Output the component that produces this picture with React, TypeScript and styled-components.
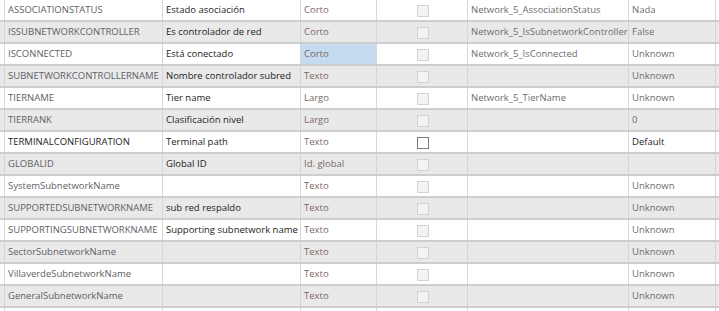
import styled, { createGlobalStyle, css } from "styled-components";

const GlobalStyle = createGlobalStyle`
    html, body {
        margin: 0;
        padding: 0;
        background: #ffffff;
        overflow: hidden;
    }
    body {
        font-family: "Open Sans", "Noto Sans", "Liberation Sans", sans-serif;
        font-size: 9.5px;
    }
`

type Field = {
    name: string
    alias: string
    type: string
    field: string
    value: string
    strong?: boolean
    editable?: boolean
    selected?: boolean
}

const fields: Field[] = [
    { name: "ASSOCIATIONSTATUS", alias: "Estado asociación", type: "Corto", field: "Network_5_AssociationStatus", value: "Nada" },
    { name: "ISSUBNETWORKCONTROLLER", alias: "Es controlador de red", type: "Corto", field: "Network_5_IsSubnetworkController", value: "False" },
    { name: "ISCONNECTED", alias: "Está conectado", type: "Corto", field: "Network_5_IsConnected", value: "Unknown", selected: true },
    { name: "SUBNETWORKCONTROLLERNAME", alias: "Nombre controlador subred", type: "Texto", field: "", value: "Unknown" },
    { name: "TIERNAME", alias: "Tier name", type: "Largo", field: "Network_5_TierName", value: "Unknown" },
    { name: "TIERRANK", alias: "Clasificación nivel", type: "Largo", field: "", value: "0" },
    { name: "TERMINALCONFIGURATION", alias: "Terminal path", type: "Texto", field: "", value: "Default", strong: true, editable: true },
    { name: "GLOBALID", alias: "Global ID", type: "Id. global", field: "", value: "" },
    { name: "SystemSubnetworkName", alias: "", type: "Texto", field: "", value: "Unknown" },
    { name: "SUPPORTEDSUBNETWORKNAME", alias: "sub red respaldo", type: "Texto", field: "", value: "Unknown" },
    { name: "SUPPORTINGSUBNETWORKNAME", alias: "Supporting subnetwork name", type: "Texto", field: "", value: "Unknown" },
    { name: "SectorSubnetworkName", alias: "", type: "Texto", field: "", value: "Unknown" },
    { name: "VillaverdeSubnetworkName", alias: "", type: "Texto", field: "", value: "Unknown" },
    { name: "GeneralSubnetworkName", alias: "", type: "Texto", field: "", value: "Unknown" },
]

const Grid = styled.div`
    display: flex;
    flex-direction: column;
    width: 719px;
    height: 311px;
    overflow: hidden;
`

const Row = styled.div<{ $alt: boolean }>`
    display: grid;
    grid-template-columns: 4px 157px 137px 75px 90px 160px 86px 1fr;
    column-gap: 1px;
    flex: 0 0 20px;
    border-bottom: 2px solid #cdcdcd;
    background: #d6d6d6;
    & > div {
        background: ${p => p.$alt ? "#e9e9e9" : "#ffffff"};
    }
`

const Cell = styled.div<{ $tone?: "name" | "alias" | "type" | "field" | "value" | "strong"; $selected?: boolean }>`
    padding: 0 0 0 3px;
    overflow: hidden;
    white-space: nowrap;
    line-height: 20px;
    color: ${p =>
        p.$tone === "strong" || p.$tone === "alias" ? "#1c1c1c"
            : p.$tone === "type" ? "#7c6666"
                : p.$tone === "name" ? "#5f6066"
                    : "#6d6d6d"};
    ${p => p.$selected && css`
        && { background: #c5dbef; }
    `}
`

const CheckCell = styled.div`
    display: flex;
    align-items: center;
    justify-content: center;
    padding-top: 2px;
    padding-left: 1px;
`

const Box = styled.span<{ $enabled?: boolean }>`
    box-sizing: border-box;
    width: 12px;
    height: 12px;
    border: 1px solid ${p => p.$enabled ? "#7b7b7b" : "#d2d2d2"};
    background: ${p => p.$enabled ? "#ffffff" : "#f3f3f3"};
`

const Spacer = styled.div``

export default function App() {
    return <Grid>
        <GlobalStyle />
        {
            fields.map((f, i) =>
                <Row key={f.name} $alt={i % 2 === 1}>
                    <Spacer />
                    <Cell $tone={f.strong ? "strong" : "name"}>{f.name}</Cell>
                    <Cell $tone="alias">{f.alias}</Cell>
                    <Cell $tone="type" $selected={f.selected}>{f.type}</Cell>
                    <CheckCell><Box $enabled={f.editable} /></CheckCell>
                    <Cell $tone="field">{f.field}</Cell>
                    <Cell $tone={f.strong ? "strong" : "value"}>{f.value}</Cell>
                    <Spacer />
                </Row>
            )
        }
        <Row $alt={false}>
            <Spacer /><Spacer /><Spacer /><Spacer /><CheckCell /><Spacer /><Spacer /><Spacer />
        </Row>
    </Grid>
}
